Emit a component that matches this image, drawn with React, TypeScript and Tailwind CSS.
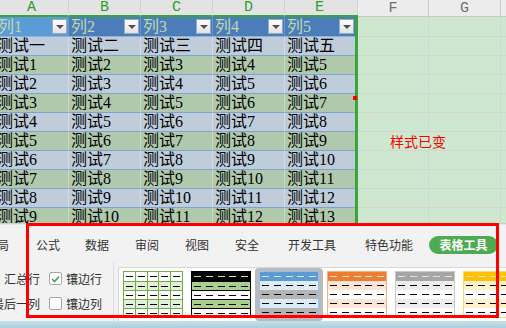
import React from 'react';

const sheetFont = "font-['Liberation_Serif','Noto_Sans_CJK_SC',serif]";
const uiFont = "font-['Noto_Sans_CJK_SC','Noto_Sans',sans-serif]";

const colW = ['w-[74px]', 'w-[72px]', 'w-[72px]', 'w-[72px]', 'w-[73px]'];
const letters = ['A', 'B', 'C', 'D', 'E'];

const rows: string[][] = [
  ['测试一', '测试二', '测试三', '测试四', '测试五'],
  ...Array.from({ length: 9 }, (_, i) => [1, 2, 3, 4, 5].map((j) => `测试${i + j}`)),
];

function Caret() {
  return (
    <span className="mr-[1px] flex h-[15px] w-[15px] shrink-0 items-center justify-center border border-[#93abc9] bg-gradient-to-b from-white to-[#e2e2e2]">
      <span className="mt-[1px] h-0 w-0 border-x-[4px] border-t-[4px] border-x-transparent border-t-[#505050]" />
    </span>
  );
}

type ThumbProps = {
  head: string;
  rows: string[];
  border: string;
  grid?: boolean;
  headDash: string;
};

function Thumb({ head, rows, border, grid, headDash }: ThumbProps) {
  const all = [head, ...rows];
  return (
    <div className={`flex w-[60px] flex-col border ${border}`}>
      {all.map((bg, r) => (
        <div key={r} className={`flex h-[9px] ${bg} ${grid && r > 0 ? 'border-t border-[#70ad47]' : ''}`}>
          {[0, 1, 2, 3, 4].map((c) => (
            <div
              key={c}
              className={`flex flex-1 items-center justify-center ${grid && c > 0 ? 'border-l border-[#70ad47]' : ''}`}
            >
              <span className={`h-[1px] w-[7px] ${r === 0 ? headDash : 'bg-black'}`} />
            </div>
          ))}
        </div>
      ))}
    </div>
  );
}

export default function App() {
  return (
    <div className={`relative flex h-[328px] w-[506px] flex-col overflow-hidden bg-white ${sheetFont}`}>
      {/* Sheet */}
      <div className="h-[223px] shrink-0 overflow-hidden">
        <div className="ml-[-5px] flex flex-col">
          {/* column letters */}
          <div className="flex h-[17px] font-['Liberation_Mono',monospace] text-[15px] leading-none">
            {letters.map((l, i) => (
              <div
                key={l}
                className={`${colW[i]} flex h-full shrink-0 items-center justify-center border-b-2 border-r border-b-[#3ca43c] border-r-[#d2d2d2] bg-[#e3e3e3] text-[#2f9e2f] ${i === 4 ? 'pr-[3px]' : ''}`}
              >
                {l}
              </div>
            ))}
            <div className="flex h-full w-[71px] shrink-0 items-center justify-center border-b border-r border-[#c8c8c8] bg-[#ececec] text-[#707070]">F</div>
            <div className="flex h-full w-[72px] shrink-0 items-center justify-center border-b border-r border-[#c8c8c8] bg-[#ececec] text-[#707070]">G</div>
            <div className="h-full w-[30px] shrink-0 border-b border-[#c8c8c8] bg-[#ececec]" />
          </div>

          {/* table header */}
          <div className="flex h-[20px] text-[16px]">
            {letters.map((l, i) => (
              <div
                key={l}
                className={`${colW[i]} flex h-full shrink-0 items-center justify-between border-b border-r border-b-[#8fb0d8] border-r-[#6f95c6] ${i === 0 ? 'bg-[#5b9bd6] pl-[3px]' : 'bg-[#4a7dba] pl-[2px]'} ${i === 4 ? 'pr-[2px]' : ''}`}
              >
                <span className="leading-none text-[#c3d8aa]">列{i + 1}</span>
                <Caret />
              </div>
            ))}
            <div className="h-full w-[71px] shrink-0 border-b border-r border-[#d4d4d4] bg-[#cee8d0]" />
            <div className="h-full w-[72px] shrink-0 border-b border-r border-[#d4d4d4] bg-[#cee8d0]" />
            <div className="h-full w-[30px] shrink-0 border-b border-[#d4d4d4] bg-[#cee8d0]" />
          </div>

          {/* data rows */}
          {rows.map((cells, r) => (
            <div key={r} className="flex h-[19px] text-[16px]">
              {cells.map((t, c) => (
                <div
                  key={c}
                  className={`${colW[c]} flex h-full shrink-0 items-center border-b border-r border-b-[#7ea3d0] pl-[2px] leading-none text-black ${r % 2 === 0 ? 'bg-[#bfcddb] border-r-[#d3dae2]' : 'bg-[#b0c9ad] border-r-[#c9d7c6]'}`}
                >
                  {t}
                </div>
              ))}
              <div
                className={`flex h-full w-[71px] shrink-0 items-center overflow-visible whitespace-nowrap border-b border-[#d4d4d4] bg-[#cee8d0] ${r === 5 ? 'pl-[32px]' : 'border-r'}`}
              >
                {r === 5 && (
                  <span className={`relative z-10 text-[14px] leading-none text-[#ff0000] ${uiFont}`}>样式已变</span>
                )}
              </div>
              <div className="h-full w-[72px] shrink-0 border-b border-r border-[#d4d4d4] bg-[#cee8d0]" />
              <div className="h-full w-[30px] shrink-0 border-b border-[#d4d4d4] bg-[#cee8d0]" />
            </div>
          ))}
        </div>
      </div>

      {/* Ribbon */}
      <div className={`relative flex h-[98px] shrink-0 flex-col bg-[#f2f2f2] ${uiFont} text-[12px] text-[#333]`}>
        <div className="h-[2px] bg-gradient-to-b from-[#b9c7cc] to-[#f2f2f2]" />
        {/* tabs */}
        <div className="mt-[5px] flex h-[30px] items-center whitespace-nowrap">
          <span className="ml-[-3px]">局</span>
          <span className="ml-[27px]">公式</span>
          <span className="ml-[25px]">数据</span>
          <span className="ml-[26px]">审阅</span>
          <span className="ml-[26px]">视图</span>
          <span className="ml-[26px]">安全</span>
          <span className="ml-[29px]">开发工具</span>
          <span className="ml-[29px]">特色功能</span>
          <span className="ml-[16px] flex h-[18px] w-[69px] shrink-0 items-center justify-center rounded-full bg-[#4fab52] font-bold text-white">
            表格工具
          </span>
        </div>

        {/* options + gallery */}
        <div className="flex flex-1 whitespace-nowrap">
          <div className="ml-[-8px] flex w-[48px] shrink-0 flex-col items-end pt-[6px]">
            <div className="flex h-[25px] items-center">汇总行</div>
            <div className="flex h-[25px] items-center">最后一列</div>
          </div>
          <div className="ml-[9px] flex shrink-0 flex-col pt-[6px]">
            <div className="flex h-[25px] items-center gap-[4px]">
              <span className="flex h-[13px] w-[13px] items-center justify-center rounded-[2px] border border-[#a6a6a6] bg-white">
                <svg width="9" height="8" viewBox="0 0 9 8">
                  <polyline points="1,4 3.5,6.5 8,1.5" fill="none" stroke="#3fa34a" strokeWidth="1.6" />
                </svg>
              </span>
              镶边行
            </div>
            <div className="flex h-[25px] items-center gap-[4px]">
              <span className="h-[13px] w-[13px] rounded-[2px] border border-[#a6a6a6] bg-white" />
              镶边列
            </div>
          </div>
          <div className="ml-[11px] mt-[2px] w-px shrink-0 bg-[#dcdcdc]" />
          <div className="ml-[4px] mt-[7px] flex shrink-0 rounded-t-[3px] border border-b-0 border-[#d6d6d6] bg-white">
            <div className="w-[68px] px-[4px] pt-[3px]">
              <Thumb head="bg-white" rows={['bg-[#e2efda]', 'bg-white', 'bg-[#e2efda]', 'bg-white']} border="border-[#70ad47]" grid headDash="bg-black" />
            </div>
            <div className="w-[68px] px-[4px] pt-[3px]">
              <Thumb head="bg-black" rows={['bg-[#a9d08e] border-t border-black', 'bg-white border-t border-black', 'bg-[#a9d08e] border-t border-black', 'bg-white border-t border-black']} border="border-black" headDash="bg-[#c6e0b4]" />
            </div>
            <div className="w-[68px] rounded-[4px] bg-[#bababa] px-[4px] pt-[3px]">
              <Thumb head="bg-[#5b9bd5]" rows={['bg-[#ddebf7]', 'bg-[#b4b4b4]', 'bg-[#ddebf7]', 'bg-[#b4b4b4]']} border="border-[#9bc2e6]" headDash="bg-[#d9ead3]" />
            </div>
            <div className="w-[68px] px-[4px] pt-[3px]">
              <Thumb head="bg-[#ed7d31]" rows={['bg-[#fce4d6]', 'bg-white', 'bg-[#fce4d6]', 'bg-white']} border="border-[#f4b084]" headDash="bg-[#d9ead3]" />
            </div>
            <div className="w-[68px] px-[4px] pt-[3px]">
              <Thumb head="bg-[#a5a5a5]" rows={['bg-[#ededed]', 'bg-white', 'bg-[#ededed]', 'bg-white']} border="border-[#c9c9c9]" headDash="bg-[#d9ead3]" />
            </div>
            <div className="w-[68px] px-[4px] pt-[3px]">
              <Thumb head="bg-[#ffc000]" rows={['bg-[#fff2cc]', 'bg-white', 'bg-[#fff2cc]', 'bg-white']} border="border-[#ffd966]" headDash="bg-[#d9ead3]" />
            </div>
          </div>
        </div>
      </div>

      {/* status strip */}
      <div className="h-[7px] shrink-0 bg-gradient-to-b from-[#c6e0ea] to-[#a9cfdf]" />

      {/* selection border of A:E */}
      <div className="absolute left-[355px] top-[15px] h-[208px] w-[3px] bg-[#3ca43c]" />
      <div className="absolute left-[353px] top-[96px] h-[4px] w-[4px] bg-[#ff0000]" />

      {/* red annotation box */}
      <div className="absolute left-[26px] top-[223px] h-[95px] w-[473px] border-[3px] border-[#ff0000]" />
    </div>
  );
}
